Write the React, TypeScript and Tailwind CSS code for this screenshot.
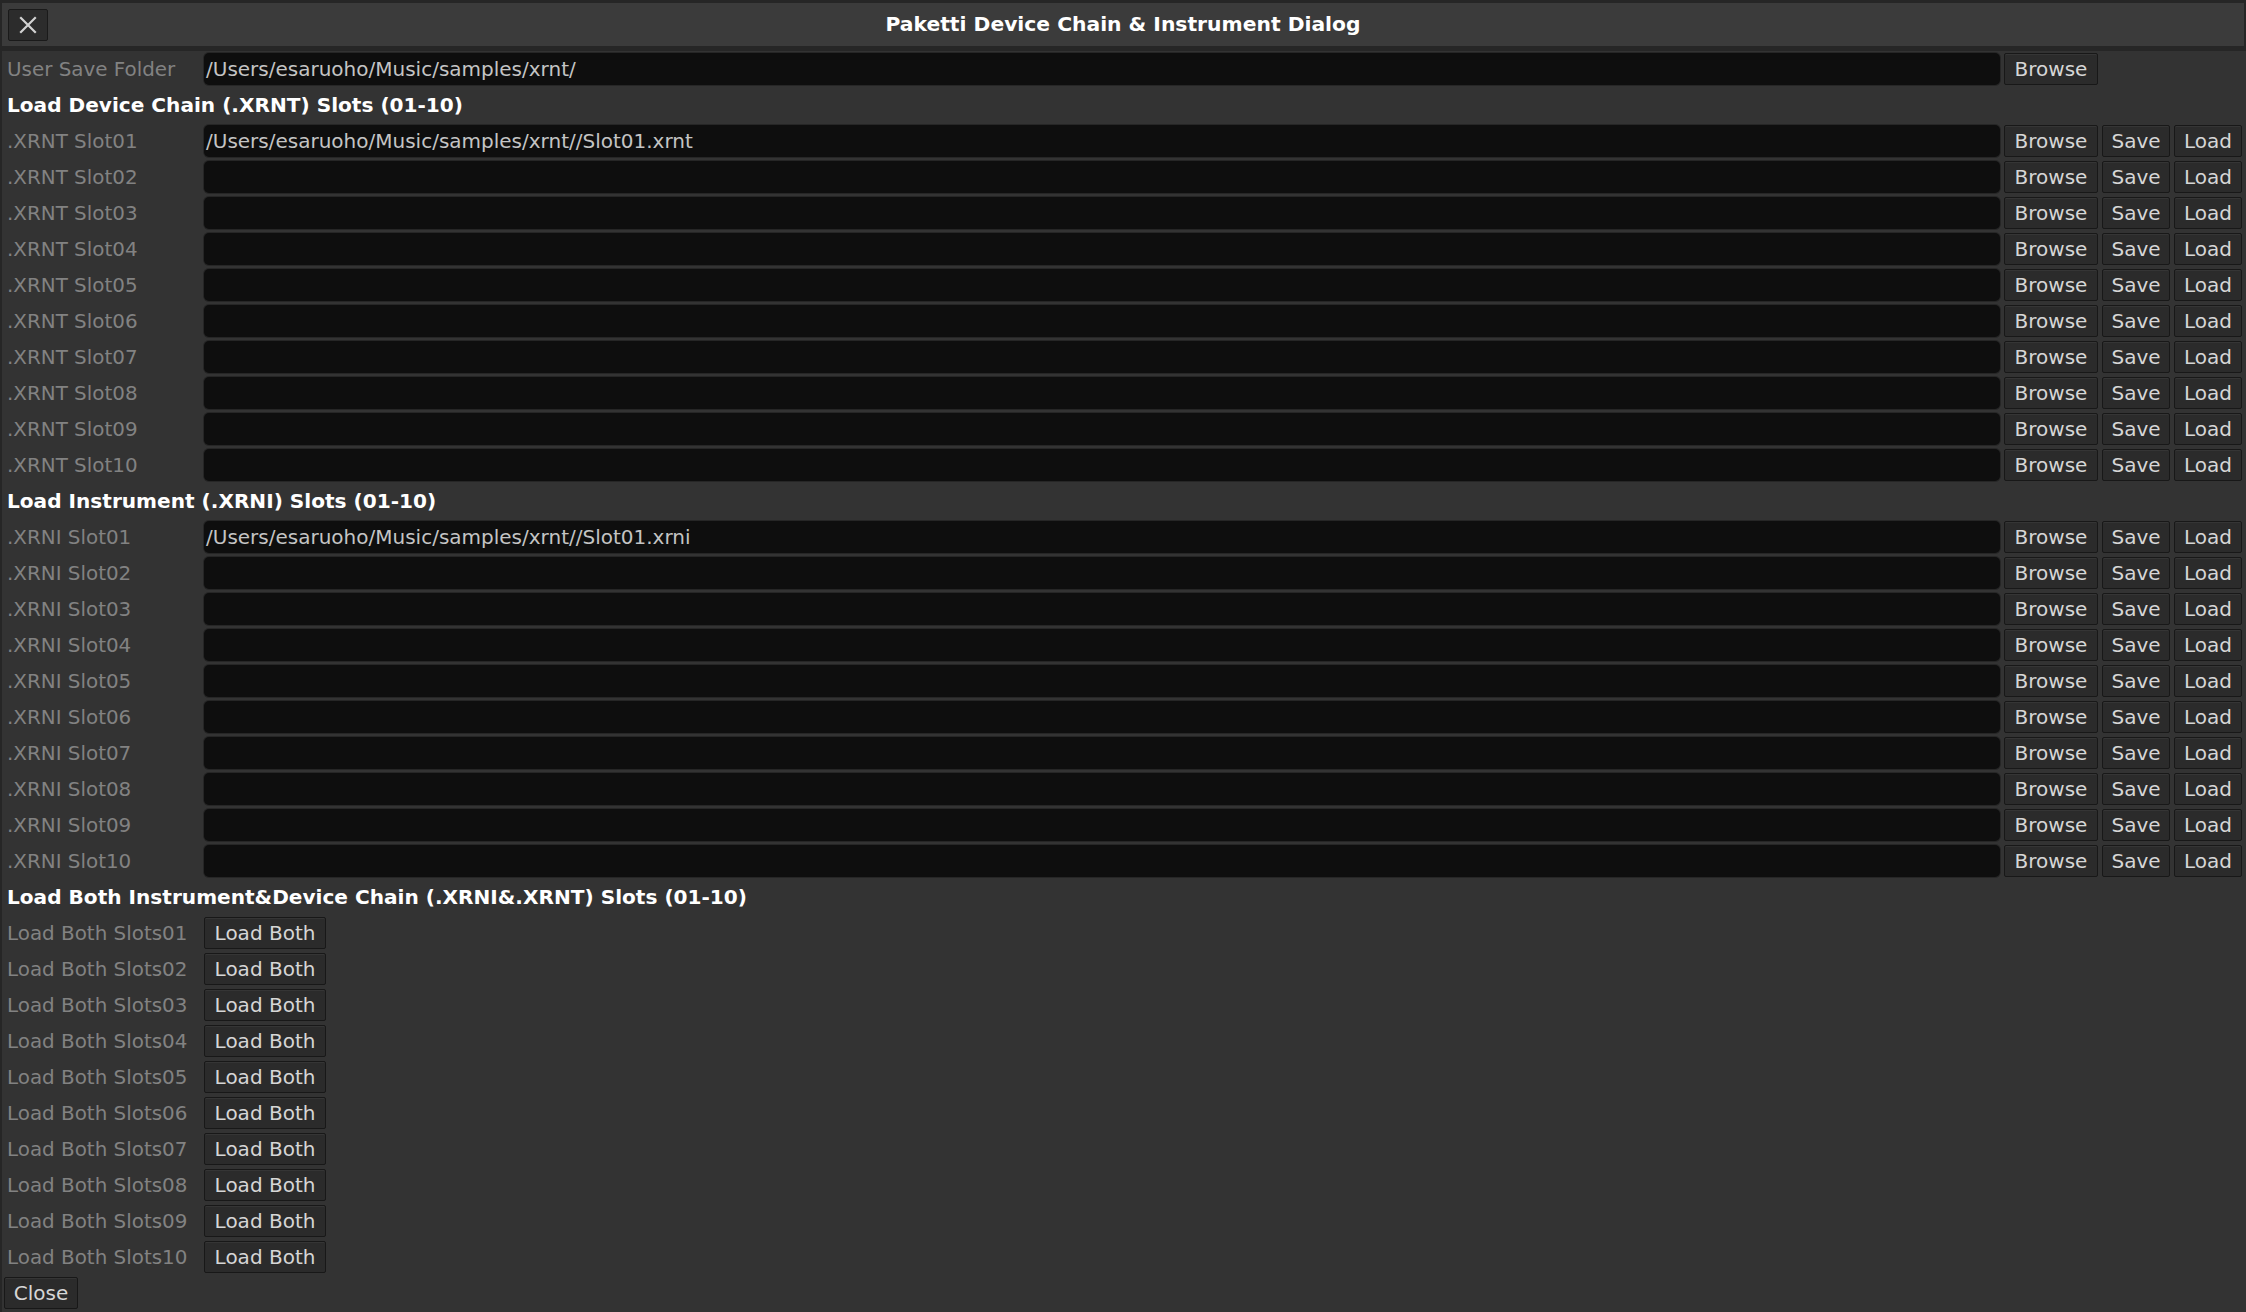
import React from "react";

const slots = ["01", "02", "03", "04", "05", "06", "07", "08", "09", "10"];

const font = { fontFamily: '"DejaVu Sans", "Liberation Sans", sans-serif' };

function Btn({ label, w }: { label: string; w: string }) {
  return (
    <button
      className={`${w} h-[32px] shrink-0 rounded-[2px] border border-[#181818] bg-[#2b2b2b] text-[20px] leading-none text-[#d6d6d6] shadow-[inset_0_1px_0_#353535]`}
    >
      {label}
    </button>
  );
}

function Field({ value }: { value?: string }) {
  return (
    <div className="h-[32px] w-[1796px] shrink-0 rounded-[5px] bg-[#0e0e0e] shadow-[0_0_0_1px_#262626] flex items-center pl-[2px] text-[20px] text-[#c4c4c4] whitespace-nowrap overflow-hidden">
      {value}
    </div>
  );
}

function Label({ text, w = "w-[196px]" }: { text: string; w?: string }) {
  return (
    <div className={`${w} shrink-0 pl-[3px] pt-[2px] text-[19.9px] text-[#828282] whitespace-nowrap`}>
      {text}
    </div>
  );
}

function Heading({ text }: { text: string }) {
  return (
    <div className="h-[32px] flex items-center pl-[3px] text-[20.1px] font-bold text-white whitespace-nowrap">
      {text}
    </div>
  );
}

function SlotRow({ name, value }: { name: string; value?: string }) {
  return (
    <div className="h-[32px] flex items-center gap-[4px]">
      <Label text={name} />
      <Field value={value} />
      <Btn label="Browse" w="w-[94px]" />
      <Btn label="Save" w="w-[68px]" />
      <Btn label="Load" w="w-[68px]" />
    </div>
  );
}

export default function App() {
  return (
    <div style={font} className="w-[2246px] h-[1312px] bg-[#262626] flex flex-col overflow-hidden">
      {/* title bar */}
      <div className="mt-[3px] mx-[2px] h-[43px] shrink-0 bg-[#3b3b3b] grid grid-cols-[60px_1fr_60px] items-center">
        <button className="ml-[6px] w-[40px] h-[32px] rounded-[2px] border border-[#1a1a1a] bg-[#2c2c2c] flex items-center justify-center">
          <svg width="18" height="18" viewBox="0 0 18 18">
            <path d="M2 2 L16 16 M16 2 L2 16" stroke="#d2d2d2" strokeWidth="2.2" strokeLinecap="square" />
          </svg>
        </button>
        <div className="text-center text-[20.3px] font-bold text-white">
          Paketti Device Chain &amp; Instrument Dialog
        </div>
        <div />
      </div>

      {/* dialog body */}
      <div className="mt-[5px] ml-[2px] flex-1 bg-[#333333] pt-[2px] pl-[2px] flex flex-col gap-[4px]">
        <div className="h-[32px] flex items-center gap-[4px]">
          <Label text="User Save Folder" />
          <Field value="/Users/esaruoho/Music/samples/xrnt/" />
          <Btn label="Browse" w="w-[94px]" />
        </div>

        <Heading text="Load Device Chain (.XRNT) Slots (01-10)" />
        {slots.map((s) => (
          <SlotRow
            key={"xrnt" + s}
            name={`.XRNT Slot${s}`}
            value={s === "01" ? "/Users/esaruoho/Music/samples/xrnt//Slot01.xrnt" : undefined}
          />
        ))}

        <Heading text="Load Instrument (.XRNI) Slots (01-10)" />
        {slots.map((s) => (
          <SlotRow
            key={"xrni" + s}
            name={`.XRNI Slot${s}`}
            value={s === "01" ? "/Users/esaruoho/Music/samples/xrnt//Slot01.xrni" : undefined}
          />
        ))}

        <Heading text="Load Both Instrument&Device Chain (.XRNI&.XRNT) Slots (01-10)" />
        {slots.map((s) => (
          <div key={"both" + s} className="h-[32px] flex items-center gap-[4px]">
            <Label text={`Load Both Slots${s}`} />
            <Btn label="Load Both" w="w-[122px]" />
          </div>
        ))}

        <div className="h-[32px] flex items-center">
          <Btn label="Close" w="w-[74px]" />
        </div>
      </div>
    </div>
  );
}
